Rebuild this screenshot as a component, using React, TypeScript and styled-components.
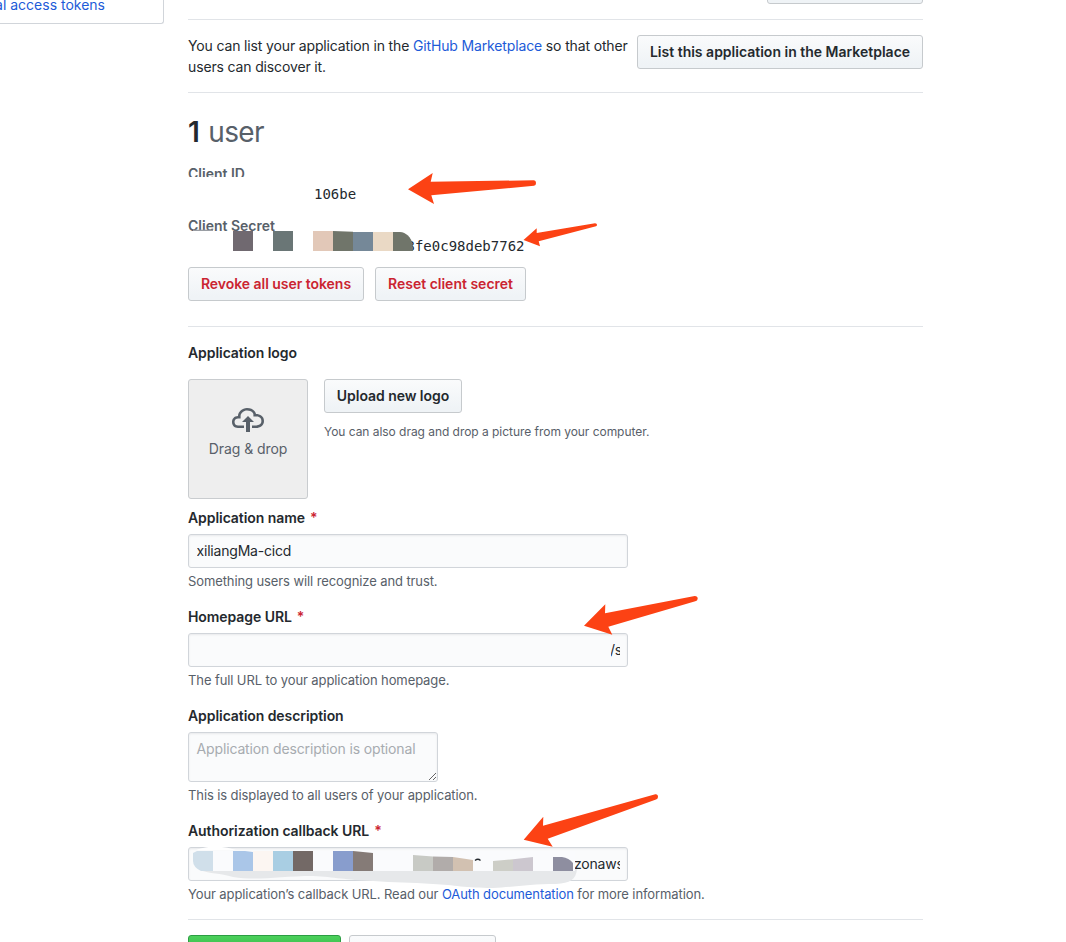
import React from 'react';
import styled, { createGlobalStyle } from 'styled-components';

const Global = createGlobalStyle`
  * { box-sizing: border-box; }
  html, body { margin: 0; background: #fff; }
  body {
    font-family: Inter, "Liberation Sans", sans-serif;
    font-size: 14px;
    line-height: 21px;
    color: #24292e;
    overflow: hidden;
  }
`;

const Page = styled.div`
  position: relative;
  display: flex;
  height: 942px;
  width: 1066px;
  overflow: hidden;
`;

const Sidebar = styled.nav`
  width: 164px;
  height: 24px;
  margin-right: 24px;
  flex: none;
  border: 1px solid #d1d5da;
  border-width: 0 1px 1px 0;
  border-radius: 0 0 3px 0;
  display: flex;
  justify-content: flex-end;
  padding-right: 58px;
`;

const Link = styled.a`
  color: #1d5bd8;
  text-decoration: none;
  white-space: nowrap;
`;

const SideLink = styled(Link)`
  margin-top: -6px;
`;

const Main = styled.main`
  width: 735px;
  flex: none;
`;

const Rule = styled.hr<{ $top?: number }>`
  height: 1px;
  border: 0;
  margin: ${p => p.$top ?? 0}px 0 0;
  background: #e1e4e8;
`;

const Button = styled.button<{ $w: number; $danger?: boolean; $track?: number }>`
  width: ${p => p.$w}px;
  height: 34px;
  flex: none;
  padding: 0;
  font: 600 14px/20px Inter, sans-serif;
  letter-spacing: ${p => p.$track ?? 0}px;
  white-space: nowrap;
  color: ${p => (p.$danger ? '#cb2431' : '#24292e')};
  border: 1px solid #c6cacd;
  border-radius: 3px;
  background: linear-gradient(#fafbfc, #eff3f6 90%);
`;

const PrimaryButton = styled(Button)`
  border-color: #2c9d43;
  background: linear-gradient(#4bd05a, #28a745 90%);
`;

const TopActions = styled.div`
  display: flex;
  justify-content: flex-end;
  align-items: flex-end;
  height: 4px;
`;

const Listing = styled.section`
  display: flex;
  justify-content: space-between;
  height: 72px;
  padding-top: 15px;
`;

const ListingText = styled.p`
  margin: 0;
  width: 445px;
  white-space: nowrap;
  letter-spacing: -0.145px;
`;

const Line = styled.span`
  display: block;
`;

const Count = styled.h2`
  margin: 21px 0 0;
  height: 36px;
  font-size: 28px;
  line-height: 36px;
  font-weight: 400;
  letter-spacing: -0.7px;
  color: #586069;
  b { font-weight: 600; color: #24292e; margin-right: 2px; }
`;

const Keys = styled.dl`
  position: relative;
  margin: 13px 0 0;
  height: 104px;
`;

const KeyName = styled.dt<{ $cut: number }>`
  height: ${p => p.$cut}px;
  margin-bottom: ${p => 21 - p.$cut}px;
  overflow: hidden;
  font-weight: 600;
  color: #586069;
`;

const KeyValue = styled.dd<{ $indent: number }>`
  margin: 0 0 10px;
  padding-left: ${p => p.$indent}px;
  font: 14px/21px "DejaVu Sans Mono", monospace;
`;

const KeyMask = styled.svg`
  position: absolute;
  left: 0;
  top: 62px;
`;

const ButtonRow = styled.div`
  display: flex;
  gap: 11px;
`;

const Label = styled.label<{ $top: number }>`
  display: block;
  margin-top: ${p => p.$top}px;
  font-weight: 600;
  letter-spacing: -0.07px;
`;

const Star = styled.span`
  color: #cb2431;
  margin-left: 5px;
`;

const LogoRow = styled.div`
  display: flex;
  gap: 16px;
  margin-top: 16px;
`;

const DropZone = styled.div`
  width: 120px;
  height: 120px;
  border: 1px solid #c9cccf;
  border-radius: 3px;
  background: #eee;
  color: #586069;
  display: flex;
  flex-direction: column;
  align-items: center;
  padding-top: 24px;
  letter-spacing: -0.08px;
  svg { fill: #586069; margin-bottom: 2px; }
`;

const Note = styled.p<{ $top?: number; $size?: number; $track?: number }>`
  margin: ${p => p.$top ?? 3}px 0 0;
  font-size: ${p => p.$size ?? 13}px;
  letter-spacing: ${p => p.$track ?? -0.1}px;
  line-height: 21px;
  color: #586069;
  white-space: nowrap;
`;

const fieldLook = `
  display: block;
  border: 1px solid #d1d5da;
  border-radius: 3px;
  background: #fafbfc;
  box-shadow: inset 0 1px 2px rgba(27, 31, 35, 0.075);
  color: #24292e;
`;

const Field = styled.div`
  ${fieldLook}
  position: relative;
  width: 440px;
  height: 34px;
  margin-top: 6px;
  padding: 6px 7px;
  line-height: 20px;
`;

const FieldValue = styled.span<{ $indent?: number; $width?: number }>`
  display: block;
  overflow: hidden;
  white-space: nowrap;
  margin-left: ${p => p.$indent ?? 0.5}px;
  width: ${p => (p.$width ? `${p.$width}px` : 'auto')};
  letter-spacing: -0.2px;
`;

const TailValue = styled(FieldValue)`
  height: 13px;
  margin-top: 4px;
  line-height: 12px;
  display: flex;
  justify-content: flex-end;
  span { margin-right: -2px; }
`;

const Area = styled.textarea`
  ${fieldLook}
  width: 250px;
  height: 50px;
  margin-top: 6px;
  padding: 5px 7.5px;
  font: 14px/21px Inter, sans-serif;
  letter-spacing: -0.14px;
  overflow: hidden;
  outline: 0;
  &::placeholder { color: #a7abb0; }
`;

const FieldMask = styled.svg`
  position: absolute;
  left: -1px;
  top: -1px;
  overflow: visible;
`;

const Submit = styled.div`
  display: flex;
  gap: 8px;
  padding-top: 15px;
`;

const Arrows = styled.svg`
  position: absolute;
  inset: 0;
  pointer-events: none;
  fill: #fc4214;
`;

export default function App() {
  return (
    <Page>
      <Global />
      <Sidebar><SideLink>Personal access tokens</SideLink></Sidebar>
      <Main>
        <TopActions><Button $w={156} /></TopActions>
        <Rule $top={15} />
        <Listing>
          <ListingText>
            <Line>You can list your application in the <Link>GitHub Marketplace</Link> so that other</Line>
            <Line>users can discover it.</Line>
          </ListingText>
          <Button $w={286}>List this application in the Marketplace</Button>
        </Listing>
        <Rule />
        <Count><b>1</b> user</Count>
        <Keys>
          <KeyName $cut={14}>Client ID</KeyName>
          <KeyValue $indent={126}>106be</KeyValue>
          <KeyName $cut={17}>Client Secret</KeyName>
          <KeyValue $indent={218.5}>3fe0c98deb7762</KeyValue>
          <KeyMask width="240" height="30" viewBox="188 225 240 30">
            <path fill="#fff" d="M188 231h90v20h-90z" />
            <path fill="#9a9ea4" d="M193 229.700h20v1.300h-20z" />
            <path fill="#706970" d="M233 231h20v20h-20z" />
            <path fill="#6a7676" d="M273 231h20v20h-20z" />
            <path fill="#e2c8b8" d="M313 231h20v20h-20z" />
            <path fill="#70756a" d="M333 231l20 .8V251h-20z" />
            <path fill="#758898" d="M353 232h20v19h-20z" />
            <path fill="#ead9c5" d="M373 232h20v19h-20z" />
            <path fill="#70756a" d="M393 232h7c6 .5 11 5 12.500 12l.5 7H393z" />
          </KeyMask>
        </Keys>
        <ButtonRow>
          <Button $w={176} $danger $track={-0.04}>Revoke all user tokens</Button>
          <Button $w={151} $danger>Reset client secret</Button>
        </ButtonRow>
        <Rule $top={25} />

        <Label $top={15}>Application logo</Label>
        <LogoRow>
          <DropZone>
            <svg width="32" height="32" viewBox="0 0 16 16">
              <path d="M7 9H5l3-3 3 3H9v5H7V9zm5-4c0-.44-.91-3-4.5-3C5.080 2 3 3.920 3 6 1.020 6 0 7.520 0 9c0 1.530 1 3 3 3h3v-1.300H3c-1.620 0-1.700-1.420-1.700-1.700 0-.17.05-1.700 1.700-1.700h1.300V6c0-1.390 1.560-2.700 3.200-2.700 2.550 0 3.130 1.550 3.200 1.800v1.200H12c.81 0 2.700.22 2.700 2.200 0 2.090-2.250 2.200-2.700 2.200h-2V12h2c2.080 0 4-1.160 4-3.500C16 6.060 14.080 5 12 5z" />
            </svg>
            <span>Drag &amp; drop</span>
          </DropZone>
          <div>
            <Button $w={138} $track={-0.05}>Upload new logo</Button>
            <Note $top={8} $size={12} $track={-0.04}>You can also drag and drop a picture from your computer.</Note>
          </div>
        </LogoRow>

        <Label $top={8}>Application name<Star>*</Star></Label>
        <Field><FieldValue>xiliangMa-cicd</FieldValue></Field>
        <Note>Something users will recognize and trust.</Note>

        <Label $top={14}>Homepage URL<Star>*</Star></Label>
        <Field><TailValue $indent={415} $width={9}><span>/s</span></TailValue></Field>
        <Note>The full URL to your application homepage.</Note>

        <Label $top={14}>Application description</Label>
        <Area placeholder="Application description is optional" />
        <Note>This is displayed to all users of your application.</Note>

        <Label $top={14}>Authorization callback URL<Star>*</Star></Label>
        <Field>
          <FieldValue $indent={378} $width={46}>zonaws</FieldValue>
          <FieldMask width="440" height="44" viewBox="188 847 440 44">
            <path fill="#fff" d="M196 850q10-4 22-3.500q10 .5 18 3.500z" />
            <path fill="#e6e8ea" d="M200 870C210 874 220 873 233 877C258 881 280 876 313 876C335 877 345 880 373 881C395 883 410 882 433 884C455 885 465 888 493 888C515 887 530 884 556 884C570 883 576 880 577 869z" />
            <path fill="#fafbfd" d="M200 851h375v20H200z" />
            <path fill="#d0dfea" d="M197 851h16v20h-12q-8-4-8-10v-8z" />
            <path fill="#aac6e8" d="M233 851h12l8 1v19h-20z" />
            <path fill="#fcf6f2" d="M253 851h20v20h-20z" />
            <path fill="#a9cee3" d="M273 851h20v20h-20z" />
            <path fill="#736966" d="M293 851h20v20h-20z" />
            <path fill="#889dcd" d="M333 851h20v20h-20z" />
            <path fill="#857b77" d="M353 851l20 2v18h-20z" />
            <path fill="#c8cac5" d="M413 855l20 1.500V871h-20z" />
            <path fill="#b1acaa" d="M433 856.500l20 .5v14h-20z" />
            <path fill="#d2c1b1" d="M453 857l20 3v11h-20z" />
            <path fill="#cdcec7" d="M493 861l20-1.800V871h-20z" />
            <path fill="#ccc7cf" d="M513 859.200l20-2.200v14h-20z" />
            <path fill="#8e8ea0" d="M553 857h9q7 1 11 6v8h-20z" />
            <path fill="none" stroke="#24292e" strokeWidth="1.300" d="M475 860.500q3-2.500 5.500 0" />
          </FieldMask>
        </Field>
        <Note>Your application’s callback URL. Read our <Link>OAuth documentation</Link> for more information.</Note>
        <Rule $top={14} />
        <Submit>
          <PrimaryButton $w={153} />
          <Button $w={147} />
        </Submit>
      </Main>
      <Arrows width="1066" height="942" viewBox="0 0 1066 942">
        <path d="M408 189.300L432.700 173L430.700 181.700L533.500 180.300Q536 180.500 536 183.300Q536 185.500 534 185.800L431.300 195.300L434 204z" />
        <path d="M523.500 240L536.700 228.300V233L595 223.300Q597 223.500 597 224.800Q597 226 596 226.300L538.700 241.300L540 246.300z" />
        <path d="M584 625.700L605.300 604.300L605 613.300L694.700 596Q697.700 596 697.700 598.700Q697.500 601 695.300 601.300L608.300 626.700L612.300 634.700z" />
        <path d="M523.700 839.700L543.300 816.700L543 825.700L655.300 794.300Q658 794 658 797Q657.800 799 656 799.500L547.700 838.700L552.700 846.700z" />
      </Arrows>
    </Page>
  );
}
